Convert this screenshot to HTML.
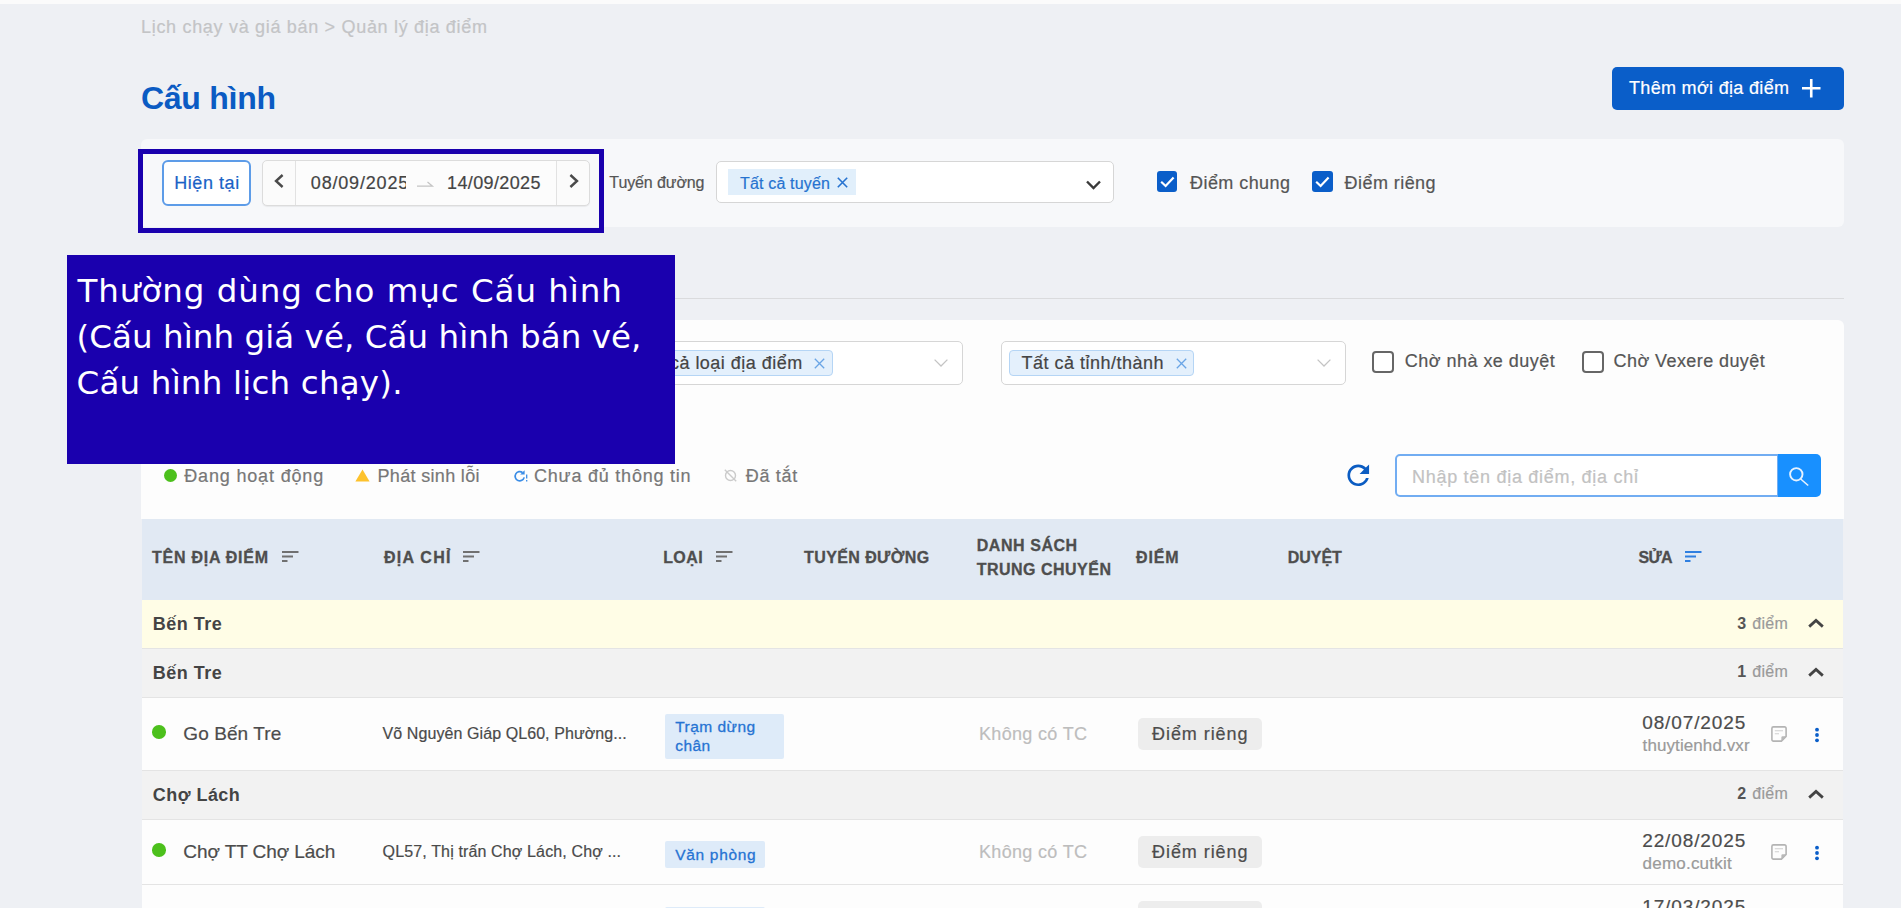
<!DOCTYPE html>
<html lang="vi"><head><meta charset="utf-8"><title>Quản lý địa điểm</title>
<style>
*{box-sizing:border-box;margin:0;padding:0}
html,body{width:1901px;height:908px;overflow:hidden}
body{background:#eef0f4;font-family:"Liberation Sans",Arial,sans-serif;color:#444;position:relative}
.abs,.t{position:absolute}
.t{white-space:nowrap;line-height:1;display:block;-webkit-text-stroke:0.2px currentColor}
.b{-webkit-text-stroke:0 currentColor}
svg{position:absolute;overflow:visible}
.topstrip{left:0;top:0;width:1901px;height:4px;background:#fbfbfb}
.btn-primary{background:#0a5ec9;border-radius:5px}
.card1{background:#f7f8fa;border-radius:6px}
.card2{background:#fdfdfd;border-radius:6px 6px 0 0}
.hl{border:5.5px solid #1a00ae}
.tip{background:#1a00ae}
.btn-now{background:#fff;border:2px solid #5d9ce8;border-radius:6px}
.datepick{background:#fbfbfb;border:1px solid #dcdcdc;border-radius:5px;box-shadow:0 1px 1px rgba(0,0,0,.06)}
.datepick .mid{background:#fcfcfc;border-left:1px solid #e2e2e2;border-right:1px solid #e2e2e2}
.select{background:#fff;border:1px solid #d6d6d6;border-radius:5px}
.tag1{background:#e1effb}
.tag2{background:#e4f0fc;border:1px solid #b5d5f5;border-radius:4px}
.cb-on{background:#0a5ec9;border-radius:3px}
.cb-off{background:#fff;border:2px solid #666;border-radius:4px}
.search{background:#fff;border:2px solid #72adf2;border-radius:5px 0 0 5px}
.search-btn{background:#1890ff;border-radius:0 5px 5px 0}
.thead{background:#e1e9f3}
.row{border-bottom:1px solid #e4e4e4}
.row.y{background:#fffde6}
.row.g{background:#f2f2f2}
.row.w{background:#fdfdfd}
.dot{background:#4cc01c;border-radius:50%}
.tagb{background:#deebf9;border-radius:2px}
.pill{background:#ededed;border-radius:5px}
.hr{background:#dadbdd;height:1px}
</style></head>
<body>
<div class="abs topstrip"></div>
<header>
<nav class="t" id="crumb" style="left:141.0px;top:17.8px;font-size:18px;color:#c3c4c6;letter-spacing:0.69px;">Lịch chạy và giá bán &gt; Quản lý địa điểm</nav>
<h1 class="t b" id="title" style="left:141.0px;top:82.4px;font-size:32px;color:#0b5bc3;font-weight:700;letter-spacing:-0.27px;">Cấu hình</h1>
<div class="abs btn-primary" style="left:1612.0px;top:66.5px;width:231.5px;height:43.5px;">
<span class="t" id="addbtn" style="left:17.0px;top:12.5px;font-size:18px;color:#fff;letter-spacing:0.32px;">Thêm mới địa điểm</span>
<svg style="left:189.5px;top:12.5px" width="18.5" height="18.5" viewBox="0 0 18.5 18.5"><path d="M9.25 0V18.5M0 9.25H18.5" stroke="#fff" stroke-width="2.6" fill="none"/></svg>
</div>
</header>
<section class="abs card1" style="left:141.0px;top:139.0px;width:1703.0px;height:87.7px;">
<div class="abs btn-now" style="left:21.0px;top:21.0px;width:89.0px;height:46.0px;">
<span class="t" id="now" style="left:10.2px;top:12.2px;font-size:18px;color:#1a62c6;letter-spacing:0.56px;">Hiện tại</span>
</div>
<div class="abs datepick" style="left:121.0px;top:21.0px;width:328.0px;height:46.0px;">
<div class="abs mid" style="left:32.0px;top:0.0px;width:261.5px;height:44.0px;"></div>
<svg style="left:11px;top:13px" width="10" height="14" viewBox="0 0 10 14"><polyline points="8.6,1 2,7 8.6,13" fill="none" stroke="#4a4a4a" stroke-width="2.4"/></svg>
<svg style="left:305.70000000000005px;top:13px" width="10" height="14" viewBox="0 0 10 14"><polyline points="1.4,1 8,7 1.4,13" fill="none" stroke="#4a4a4a" stroke-width="2.4"/></svg>
<span class="t" id="d1" style="left:47.8px;top:13.2px;font-size:18px;color:#444;letter-spacing:0.82px;width:95px;overflow:hidden;">08/09/2025</span>
<svg style="left:154px;top:19px" width="17" height="8" viewBox="0 0 17 8"><path d="M0 6.2H15.5L10.5 2" fill="none" stroke="#c4c4c4" stroke-width="1.2"/></svg>
<span class="t" id="d2" style="left:184.0px;top:13.2px;font-size:18px;color:#444;letter-spacing:0.38px;">14/09/2025</span>
</div>
<span class="t" id="route" style="left:468.3px;top:36.4px;font-size:16px;color:#555;letter-spacing:-0.10px;">Tuyến đường</span>
<div class="abs select" style="left:574.6px;top:21.5px;width:398.4px;height:42.5px;">
<div class="abs tag1" style="left:11.8px;top:7.8px;width:127.2px;height:25.5px;"></div>
<span class="t" id="alltuyen" style="left:23.4px;top:14.2px;font-size:16px;color:#2673d0;letter-spacing:0.17px;">Tất cả tuyến</span>
<svg style="left:120.39999999999998px;top:15.0px" width="11" height="11" viewBox="0 0 11 11"><path d="M0.8 0.8L10.2 10.2M10.2 0.8L0.8 10.2" stroke="#2673d0" stroke-width="1.6" fill="none"/></svg>
<svg style="left:369.1px;top:18.30000000000001px" width="15" height="10" viewBox="0 0 15 10"><polyline points="1,1.5 7.5,8 14,1.5" fill="none" stroke="#3a3a3a" stroke-width="2.4"/></svg>
</div>
<div class="abs cb-on" style="left:1015.8px;top:32.0px;width:20.6px;height:21.0px;"><svg style="left:0;top:0" width="20.6" height="21" viewBox="0 0 20.6 21"><polyline points="4.2,10.8 8.6,15 16.6,6.6" fill="none" stroke="#fff" stroke-width="2.2"/></svg></div>
<span class="t" id="cbt0" style="left:1049.0px;top:35.2px;font-size:18px;color:#555;letter-spacing:0.44px;">Điểm chung</span>
<div class="abs cb-on" style="left:1171.0px;top:32.0px;width:20.6px;height:21.0px;"><svg style="left:0;top:0" width="20.6" height="21" viewBox="0 0 20.6 21"><polyline points="4.2,10.8 8.6,15 16.6,6.6" fill="none" stroke="#fff" stroke-width="2.2"/></svg></div>
<span class="t" id="cbt1" style="left:1203.6px;top:35.2px;font-size:18px;color:#555;letter-spacing:0.44px;">Điểm riêng</span>
</section>
<div class="abs hr" style="left:141px;top:297.6px;width:1703px"></div>
<section class="abs card2" style="left:141.0px;top:319.8px;width:1702.8px;height:199.7px;">
<div class="abs select" style="left:477.0px;top:21.2px;width:345.0px;height:44.5px;">
<div class="abs tag2" style="left:8.0px;top:8.2px;width:205.7px;height:25.8px;"></div>
<span class="t" id="allloai" style="left:18.0px;top:12.1px;font-size:18px;color:#444;letter-spacing:0.48px;">Tất cả loại địa điểm</span>
<svg style="left:195px;top:16px" width="11" height="11" viewBox="0 0 11 11"><path d="M0.8 0.8L10.2 10.2M10.2 0.8L0.8 10.2" stroke="#6aa5e6" stroke-width="1.3" fill="none"/></svg>
<svg style="left:315px;top:17.5px" width="14" height="8" viewBox="0 0 14 8"><polyline points="0.6,0.6 7,7 13.4,0.6" fill="none" stroke="#c4c4c4" stroke-width="1.3"/></svg>
</div>
<div class="abs select" style="left:859.5px;top:21.2px;width:345.2px;height:44.5px;">
<div class="abs tag2" style="left:7.5px;top:8.2px;width:185.0px;height:25.8px;"></div>
<span class="t" id="alltinh" style="left:20.0px;top:12.1px;font-size:18px;color:#444;letter-spacing:0.49px;">Tất cả tỉnh/thành</span>
<svg style="left:174.0px;top:16px" width="11" height="11" viewBox="0 0 11 11"><path d="M0.8 0.8L10.2 10.2M10.2 0.8L0.8 10.2" stroke="#6aa5e6" stroke-width="1.3" fill="none"/></svg>
<svg style="left:315.5px;top:17.5px" width="14" height="8" viewBox="0 0 14 8"><polyline points="0.6,0.6 7,7 13.4,0.6" fill="none" stroke="#c4c4c4" stroke-width="1.3"/></svg>
</div>
<div class="abs cb-off" style="left:1231.0px;top:31.2px;width:21.6px;height:21.6px;"></div>
<span class="t" id="cbo0" style="left:1263.8px;top:32.7px;font-size:18px;color:#555;letter-spacing:0.47px;">Chờ nhà xe duyệt</span>
<div class="abs cb-off" style="left:1441.0px;top:31.2px;width:21.6px;height:21.6px;"></div>
<span class="t" id="cbo1" style="left:1472.6px;top:32.7px;font-size:18px;color:#555;letter-spacing:0.41px;">Chờ Vexere duyệt</span>
<div class="abs dot" style="left:23.0px;top:149.4px;width:13.0px;height:13.0px;"></div>
<span class="t" id="lg0" style="left:43.2px;top:147.3px;font-size:18px;color:#777;letter-spacing:0.84px;">Đang hoạt động</span>
<svg style="left:214.39999999999998px;top:149.5px" width="15" height="13" viewBox="0 0 15 13"><path d="M7.5 0.6L14.6 12.6H0.4Z" fill="#fdc22d"/></svg>
<span class="t" id="lg1" style="left:236.5px;top:147.3px;font-size:18px;color:#777;letter-spacing:0.33px;">Phát sinh lỗi</span>
<svg style="left:373px;top:149.8px" width="14" height="12" viewBox="0 0 14 12"><path d="M8.6 2.6A4.6 4.6 0 1 0 10.2 7.4" fill="none" stroke="#3b8de6" stroke-width="1.7"/><path d="M10.6 0.2V4.6H6.2Z" fill="#3b8de6"/><path d="M12.7 4.4V8.6M12.7 10V11.6" stroke="#3b8de6" stroke-width="1.3" fill="none"/></svg>
<span class="t" id="lg2" style="left:393.0px;top:147.3px;font-size:18px;color:#777;letter-spacing:0.78px;">Chưa đủ thông tin</span>
<svg style="left:583.4px;top:149.7px" width="13" height="13" viewBox="0 0 13 13"><circle cx="6.5" cy="6.5" r="5" fill="none" stroke="#cbcbcb" stroke-width="1.4"/><path d="M0.8 0.8L12.2 12.2" stroke="#cbcbcb" stroke-width="1.4"/></svg>
<span class="t" id="lg3" style="left:604.7px;top:147.3px;font-size:18px;color:#777;letter-spacing:0.72px;">Đã tắt</span>
<svg style="left:1200.6px;top:139.6px" width="32.5" height="32.5" viewBox="0 0 24 24"><path fill="#0b5cc2" d="M17.65 6.35C16.2 4.9 14.21 4 12 4c-4.42 0-7.99 3.58-7.99 8s3.57 8 7.99 8c3.73 0 6.84-2.55 7.73-6h-2.08c-.82 2.33-3.04 4-5.65 4-3.31 0-6-2.69-6-6s2.690-6 6-6c1.66 0 3.14.69 4.22 1.78L13 11h7V4l-2.35 2.35z"/></svg>
<div class="abs search" style="left:1254.0px;top:134.4px;width:384.0px;height:42.4px;">
<span class="t" id="ph" style="left:15.0px;top:11.6px;font-size:18px;color:#c2c2c2;letter-spacing:0.71px;">Nhập tên địa điểm, địa chỉ</span>
</div>
<div class="abs search-btn" style="left:1637.4px;top:134.4px;width:42.3px;height:42.4px;"><svg style="left:11.0px;top:12.8px" width="20" height="19" viewBox="0 0 20 19"><circle cx="7.3" cy="7.3" r="6.2" fill="none" stroke="#e6f2ff" stroke-width="1.9"/><path d="M11.7 12L19.2 18.5" stroke="#e6f2ff" stroke-width="1.6" /></svg></div>
</section>
<section class="abs table" style="left:142.0px;top:519.5px;width:1701.0px;height:388.5px;">
<div class="abs thead" style="left:0.0px;top:-0.5px;width:1701.0px;height:81.0px;">
<span class="t b" id="h0" style="left:10.0px;top:31.3px;font-size:16px;color:#4e4e4e;font-weight:700;letter-spacing:0.74px;-webkit-text-stroke:0.3px #4e4e4e;">TÊN ĐỊA ĐIỂM</span>
<svg style="left:140.1px;top:32.4px" width="17" height="11" viewBox="0 0 17 11"><g stroke="#707070" stroke-width="2" stroke-linecap="butt"><line x1="0" y1="1" x2="16.5" y2="1"/><line x1="0" y1="5.5" x2="11" y2="5.5"/><line x1="0" y1="10" x2="5.5" y2="10"/></g></svg>
<span class="t b" id="h1" style="left:242.0px;top:31.3px;font-size:16px;color:#4e4e4e;font-weight:700;letter-spacing:1.24px;-webkit-text-stroke:0.3px #4e4e4e;">ĐỊA CHỈ</span>
<svg style="left:320.6px;top:32.4px" width="17" height="11" viewBox="0 0 17 11"><g stroke="#707070" stroke-width="2" stroke-linecap="butt"><line x1="0" y1="1" x2="16.5" y2="1"/><line x1="0" y1="5.5" x2="11" y2="5.5"/><line x1="0" y1="10" x2="5.5" y2="10"/></g></svg>
<span class="t b" id="h2" style="left:521.2px;top:31.3px;font-size:16px;color:#4e4e4e;font-weight:700;letter-spacing:0.40px;-webkit-text-stroke:0.3px #4e4e4e;">LOẠI</span>
<svg style="left:573.5px;top:32.4px" width="17" height="11" viewBox="0 0 17 11"><g stroke="#707070" stroke-width="2" stroke-linecap="butt"><line x1="0" y1="1" x2="16.5" y2="1"/><line x1="0" y1="5.5" x2="11" y2="5.5"/><line x1="0" y1="10" x2="5.5" y2="10"/></g></svg>
<span class="t b" id="h3" style="left:662.0px;top:31.3px;font-size:16px;color:#4e4e4e;font-weight:700;letter-spacing:0.41px;-webkit-text-stroke:0.3px #4e4e4e;">TUYẾN ĐƯỜNG</span>
<span class="t b" id="h4a" style="left:834.7px;top:18.8px;font-size:16px;color:#4e4e4e;font-weight:700;letter-spacing:0.56px;-webkit-text-stroke:0.3px #4e4e4e;">DANH SÁCH</span>
<span class="t b" id="h4b" style="left:834.7px;top:43.3px;font-size:16px;color:#4e4e4e;font-weight:700;letter-spacing:0.49px;-webkit-text-stroke:0.3px #4e4e4e;">TRUNG CHUYỂN</span>
<span class="t b" id="h5" style="left:994.0px;top:31.3px;font-size:16px;color:#4e4e4e;font-weight:700;letter-spacing:0.84px;-webkit-text-stroke:0.3px #4e4e4e;">ĐIỂM</span>
<span class="t b" id="h6" style="left:1145.8px;top:31.3px;font-size:16px;color:#4e4e4e;font-weight:700;letter-spacing:-0.06px;-webkit-text-stroke:0.3px #4e4e4e;">DUYỆT</span>
<span class="t b" id="h7" style="left:1496.5px;top:31.3px;font-size:16px;color:#4e4e4e;font-weight:700;letter-spacing:-0.75px;-webkit-text-stroke:0.3px #4e4e4e;">SỬA</span>
<svg style="left:1543.3px;top:32.4px" width="17" height="11" viewBox="0 0 17 11"><g stroke="#2f7fe0" stroke-width="2" stroke-linecap="butt"><line x1="0" y1="1" x2="16.5" y2="1"/><line x1="0" y1="5.5" x2="11" y2="5.5"/><line x1="0" y1="10" x2="5.5" y2="10"/></g></svg>
</div>
<div class="abs row y" style="left:0.0px;top:80.5px;width:1701.0px;height:48.5px;">
<span class="t b" id="g0" style="left:10.8px;top:15.0px;font-size:18px;color:#444;font-weight:700;letter-spacing:0.49px;">Bến Tre</span>
<span class="t b" id="g0n" style="left:1595.3px;top:15.7px;font-size:16px;color:#555;font-weight:700;">3</span>
<span class="t" id="g0d" style="left:1610.2px;top:15.7px;font-size:16px;color:#9a9a9a;letter-spacing:0.34px;">điểm</span>
<svg style="left:1665.5px;top:19.4px" width="16" height="9" viewBox="0 0 16 9"><polyline points="1.2,7.6 8,1.5 14.8,7.6" fill="none" stroke="#444" stroke-width="2.8" stroke-linejoin="miter"/></svg>
</div>
<div class="abs row g" style="left:0.0px;top:129.0px;width:1701.0px;height:49.0px;">
<span class="t b" id="g1" style="left:10.8px;top:15.0px;font-size:18px;color:#444;font-weight:700;letter-spacing:0.49px;">Bến Tre</span>
<span class="t b" id="g1n" style="left:1595.3px;top:15.7px;font-size:16px;color:#555;font-weight:700;">1</span>
<span class="t" id="g1d" style="left:1610.2px;top:15.7px;font-size:16px;color:#9a9a9a;letter-spacing:0.34px;">điểm</span>
<svg style="left:1665.5px;top:19.4px" width="16" height="9" viewBox="0 0 16 9"><polyline points="1.2,7.6 8,1.5 14.8,7.6" fill="none" stroke="#444" stroke-width="2.8" stroke-linejoin="miter"/></svg>
</div>
<div class="abs row w" style="left:0.0px;top:178.0px;width:1701.0px;height:73.0px;">
<div class="abs dot" style="left:10.2px;top:27.6px;width:13.7px;height:13.7px;"></div>
<span class="t" id="n0" style="left:41.3px;top:26.4px;font-size:19px;color:#4c4c4c;letter-spacing:0.09px;">Go Bến Tre</span>
<span class="t" id="a0" style="left:240.6px;top:28.8px;font-size:16px;color:#4a4a4a;letter-spacing:0.08px;">Võ Nguyên Giáp QL60, Phường...</span>
<div class="abs tagb" style="left:522.8px;top:16.0px;width:119.2px;height:45.1px;"></div>
<span class="t" id="tg0_0" style="left:533.2px;top:21.2px;font-size:15.5px;color:#2673d3;letter-spacing:0.48px;-webkit-text-stroke:0.3px #2673d3;">Trạm dừng</span>
<span class="t" id="tg0_1" style="left:533.2px;top:40.2px;font-size:15.5px;color:#2673d3;letter-spacing:0.45px;-webkit-text-stroke:0.3px #2673d3;">chân</span>
<span class="t" id="tc0" style="left:837.0px;top:27.9px;font-size:18px;color:#bdbdbd;letter-spacing:0.33px;">Không có TC</span>
<div class="abs pill" style="left:996.0px;top:20.1px;width:123.5px;height:32.0px;"></div>
<span class="t" id="pl0" style="left:1010.0px;top:27.7px;font-size:18px;color:#4c4c4c;letter-spacing:0.94px;">Điểm riêng</span>
<span class="t" id="dt0" style="left:1500.2px;top:15.8px;font-size:19px;color:#4c4c4c;letter-spacing:0.88px;">08/07/2025</span>
<span class="t" id="us0" style="left:1500.6px;top:39.3px;font-size:17px;color:#9a9a9a;letter-spacing:0.09px;">thuytienhd.vxr</span>
<svg style="left:1628.8px;top:28.3px" width="16" height="16" viewBox="0 0 16 16"><path d="M2.4 0.9 H13.6 A1.5 1.5 0 0 1 15.1 2.4 V10.4 L10.4 15.1 H2.4 A1.5 1.5 0 0 1 0.9 13.6 V2.4 A1.5 1.5 0 0 1 2.4 0.9 Z" fill="none" stroke="#b4b4b4" stroke-width="1.6" stroke-linejoin="round"/><path d="M15.1 10.2 H11.6 A1.2 1.2 0 0 0 10.4 11.4 V15.1 Z" fill="#b9b9b9"/><path d="M3.8 4.8 H12 M3.8 7.8 H8" stroke="#cfcfcf" stroke-width="1.1" fill="none"/></svg>
<svg style="left:1672.8px;top:29.0px" width="4" height="16" viewBox="0 0 4 16"><g fill="#0a5ec9"><circle cx="2" cy="2.7" r="1.9"/><circle cx="2" cy="8" r="1.9"/><circle cx="2" cy="13.3" r="1.9"/></g></svg>
</div>
<div class="abs row g" style="left:0.0px;top:251.0px;width:1701.0px;height:49.0px;">
<span class="t b" id="g2" style="left:10.8px;top:15.0px;font-size:18px;color:#444;font-weight:700;letter-spacing:0.46px;">Chợ Lách</span>
<span class="t b" id="g2n" style="left:1595.3px;top:15.7px;font-size:16px;color:#555;font-weight:700;">2</span>
<span class="t" id="g2d" style="left:1610.2px;top:15.7px;font-size:16px;color:#9a9a9a;letter-spacing:0.34px;">điểm</span>
<svg style="left:1665.5px;top:19.4px" width="16" height="9" viewBox="0 0 16 9"><polyline points="1.2,7.6 8,1.5 14.8,7.6" fill="none" stroke="#444" stroke-width="2.8" stroke-linejoin="miter"/></svg>
</div>
<div class="abs row w" style="left:0.0px;top:300.0px;width:1701.0px;height:65.1px;">
<div class="abs dot" style="left:10.2px;top:23.6px;width:13.7px;height:13.7px;"></div>
<span class="t" id="n1" style="left:41.3px;top:22.5px;font-size:19px;color:#4c4c4c;letter-spacing:-0.08px;">Chợ TT Chợ Lách</span>
<span class="t" id="a1" style="left:240.6px;top:24.8px;font-size:16px;color:#4a4a4a;letter-spacing:0.14px;">QL57, Thị trấn Chợ Lách, Chợ ...</span>
<div class="abs tagb" style="left:522.8px;top:21.8px;width:100.6px;height:26.3px;"></div>
<span class="t" id="tg1_0" style="left:533.2px;top:27.0px;font-size:15.5px;color:#2673d3;letter-spacing:0.69px;-webkit-text-stroke:0.3px #2673d3;">Văn phòng</span>
<span class="t" id="tc1" style="left:837.0px;top:23.9px;font-size:18px;color:#bdbdbd;letter-spacing:0.33px;">Không có TC</span>
<div class="abs pill" style="left:996.0px;top:16.1px;width:123.5px;height:32.0px;"></div>
<span class="t" id="pl1" style="left:1010.0px;top:23.7px;font-size:18px;color:#4c4c4c;letter-spacing:0.94px;">Điểm riêng</span>
<span class="t" id="dt1" style="left:1500.2px;top:11.9px;font-size:19px;color:#4c4c4c;letter-spacing:0.88px;">22/08/2025</span>
<span class="t" id="us1" style="left:1500.6px;top:35.4px;font-size:17px;color:#9a9a9a;letter-spacing:0.21px;">demo.cutkit</span>
<svg style="left:1628.8px;top:24.3px" width="16" height="16" viewBox="0 0 16 16"><path d="M2.4 0.9 H13.6 A1.5 1.5 0 0 1 15.1 2.4 V10.4 L10.4 15.1 H2.4 A1.5 1.5 0 0 1 0.9 13.6 V2.4 A1.5 1.5 0 0 1 2.4 0.9 Z" fill="none" stroke="#b4b4b4" stroke-width="1.6" stroke-linejoin="round"/><path d="M15.1 10.2 H11.6 A1.2 1.2 0 0 0 10.4 11.4 V15.1 Z" fill="#b9b9b9"/><path d="M3.8 4.8 H12 M3.8 7.8 H8" stroke="#cfcfcf" stroke-width="1.1" fill="none"/></svg>
<svg style="left:1672.8px;top:25.0px" width="4" height="16" viewBox="0 0 4 16"><g fill="#0a5ec9"><circle cx="2" cy="2.7" r="1.9"/><circle cx="2" cy="8" r="1.9"/><circle cx="2" cy="13.3" r="1.9"/></g></svg>
</div>
<div class="abs row w" style="left:0.0px;top:365.1px;width:1701.0px;height:66.0px;">
<div class="abs tagb" style="left:522.8px;top:22.0px;width:100.6px;height:25.4px;"></div>
<div class="abs pill" style="left:996.0px;top:16.6px;width:123.5px;height:32.0px;"></div>
<span class="t" id="pl2" style="left:1010.0px;top:24.2px;font-size:18px;color:#4c4c4c;letter-spacing:0.94px;">Điểm riêng</span>
<span class="t" id="dt2" style="left:1500.2px;top:12.3px;font-size:19px;color:#4c4c4c;letter-spacing:0.88px;">17/03/2025</span>
</div>
</section>
<div class="abs hl" style="left:138.0px;top:149.0px;width:465.7px;height:83.5px;"></div>
<aside class="abs tip" style="left:67.0px;top:255.0px;width:607.6px;height:208.8px;">
<span class="t" id="tp0" style="left:10.5px;top:20.0px;font-size:32.5px;color:#fff;font-family:'DejaVu Sans','Liberation Sans',sans-serif;letter-spacing:0.95px;-webkit-text-stroke:0;">Thường dùng cho mục Cấu hình</span>
<span class="t" id="tp1" style="left:9.5px;top:66.0px;font-size:32.5px;color:#fff;font-family:'DejaVu Sans','Liberation Sans',sans-serif;letter-spacing:0.06px;-webkit-text-stroke:0;">(Cấu hình giá vé, Cấu hình bán vé,</span>
<span class="t" id="tp2" style="left:9.5px;top:111.5px;font-size:32.5px;color:#fff;font-family:'DejaVu Sans','Liberation Sans',sans-serif;letter-spacing:0.20px;-webkit-text-stroke:0;">Cấu hình lịch chạy).</span>
</aside>
</body></html>
